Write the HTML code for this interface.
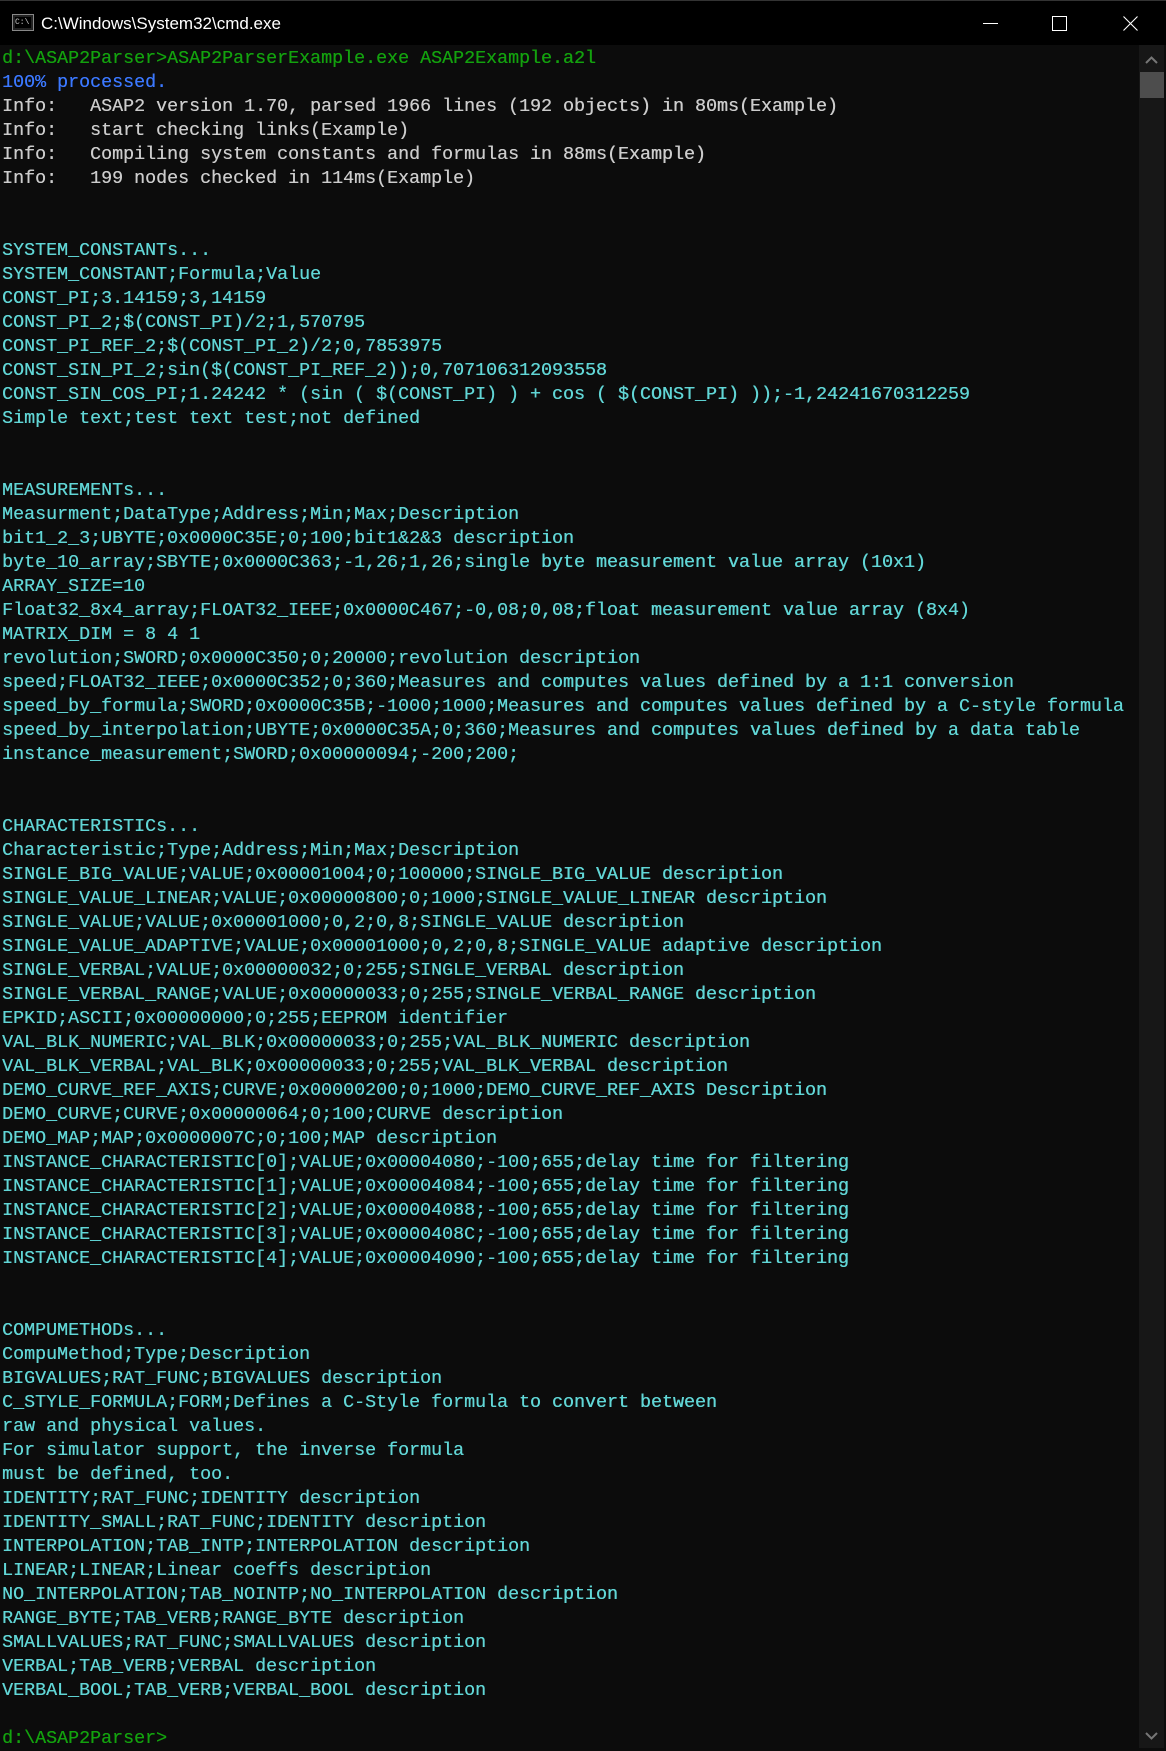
<!DOCTYPE html>
<html><head><meta charset="utf-8"><style>
html,body{margin:0;padding:0;}
body{width:1166px;height:1751px;background:#0c0c0c;position:relative;overflow:hidden;}
#title{position:absolute;left:0;top:0;width:1166px;height:45px;background:#000;border-top:1px solid #333;box-sizing:border-box;}
#title .t{position:absolute;left:41px;top:13px;font:17px "Liberation Sans",sans-serif;color:#fff;}
#icon{position:absolute;left:12px;top:13px;width:22px;height:17px;border:1px solid #888;box-sizing:border-box;background:#222;}
#icon span{position:absolute;left:2px;top:2px;width:16px;height:11px;background:#000;color:#ccc;font:8px "Liberation Mono",monospace;line-height:11px;}
pre{position:absolute;left:2px;top:47px;margin:0;font-family:"Liberation Mono",monospace;font-size:18.33px;line-height:24px;color:#cccccc;white-space:pre;text-shadow:0.3px 0 0 currentColor;}
.g{color:#13a10e}.b{color:#3b78ff}.c{color:#61d6d6}
#sb{position:absolute;left:1139px;top:45px;width:25px;height:1703px;background:#171717;}
#thumb{position:absolute;left:1140px;top:72px;width:24px;height:26px;background:#4d4d4d;}
</style></head><body>
<div id="title"><div id="icon"><span>C:\</span></div><div class="t">C:\Windows\System32\cmd.exe</div>
<svg style="position:absolute;left:966px;top:0" width="200" height="45"><line x1="17" y1="22.5" x2="32" y2="22.5" stroke="#fff" stroke-width="1"/><rect x="86.5" y="15.5" width="14" height="14" fill="none" stroke="#fff"/><path d="M157.5 15.5L171.5 29.5M171.5 15.5L157.5 29.5" stroke="#fff" stroke-width="1.1"/></svg></div>
<div id="sb"></div><div id="thumb"></div>
<svg style="position:absolute;left:1139px;top:52px" width="25" height="14"><path d="M7 11L12.5 5.5L18 11" fill="none" stroke="#777" stroke-width="2"/></svg>
<svg style="position:absolute;left:1139px;top:1730px" width="25" height="14"><path d="M7 3L12.5 8.5L18 3" fill="none" stroke="#777" stroke-width="2"/></svg>
<pre><span class="g">d:\ASAP2Parser>ASAP2ParserExample.exe ASAP2Example.a2l</span>
<span class="b">100% processed.</span>
Info:   ASAP2 version 1.70, parsed 1966 lines (192 objects) in 80ms(Example)
Info:   start checking links(Example)
Info:   Compiling system constants and formulas in 88ms(Example)
Info:   199 nodes checked in 114ms(Example)
<span class="c">

SYSTEM_CONSTANTs...
SYSTEM_CONSTANT;Formula;Value
CONST_PI;3.14159;3,14159
CONST_PI_2;$(CONST_PI)/2;1,570795
CONST_PI_REF_2;$(CONST_PI_2)/2;0,7853975
CONST_SIN_PI_2;sin($(CONST_PI_REF_2));0,707106312093558
CONST_SIN_COS_PI;1.24242 * (sin ( $(CONST_PI) ) + cos ( $(CONST_PI) ));-1,24241670312259
Simple text;test text test;not defined


MEASUREMENTs...
Measurment;DataType;Address;Min;Max;Description
bit1_2_3;UBYTE;0x0000C35E;0;100;bit1&amp;2&amp;3 description
byte_10_array;SBYTE;0x0000C363;-1,26;1,26;single byte measurement value array (10x1)
ARRAY_SIZE=10
Float32_8x4_array;FLOAT32_IEEE;0x0000C467;-0,08;0,08;float measurement value array (8x4)
MATRIX_DIM = 8 4 1
revolution;SWORD;0x0000C350;0;20000;revolution description
speed;FLOAT32_IEEE;0x0000C352;0;360;Measures and computes values defined by a 1:1 conversion
speed_by_formula;SWORD;0x0000C35B;-1000;1000;Measures and computes values defined by a C-style formula
speed_by_interpolation;UBYTE;0x0000C35A;0;360;Measures and computes values defined by a data table
instance_measurement;SWORD;0x00000094;-200;200;


CHARACTERISTICs...
Characteristic;Type;Address;Min;Max;Description
SINGLE_BIG_VALUE;VALUE;0x00001004;0;100000;SINGLE_BIG_VALUE description
SINGLE_VALUE_LINEAR;VALUE;0x00000800;0;1000;SINGLE_VALUE_LINEAR description
SINGLE_VALUE;VALUE;0x00001000;0,2;0,8;SINGLE_VALUE description
SINGLE_VALUE_ADAPTIVE;VALUE;0x00001000;0,2;0,8;SINGLE_VALUE adaptive description
SINGLE_VERBAL;VALUE;0x00000032;0;255;SINGLE_VERBAL description
SINGLE_VERBAL_RANGE;VALUE;0x00000033;0;255;SINGLE_VERBAL_RANGE description
EPKID;ASCII;0x00000000;0;255;EEPROM identifier
VAL_BLK_NUMERIC;VAL_BLK;0x00000033;0;255;VAL_BLK_NUMERIC description
VAL_BLK_VERBAL;VAL_BLK;0x00000033;0;255;VAL_BLK_VERBAL description
DEMO_CURVE_REF_AXIS;CURVE;0x00000200;0;1000;DEMO_CURVE_REF_AXIS Description
DEMO_CURVE;CURVE;0x00000064;0;100;CURVE description
DEMO_MAP;MAP;0x0000007C;0;100;MAP description
INSTANCE_CHARACTERISTIC[0];VALUE;0x00004080;-100;655;delay time for filtering
INSTANCE_CHARACTERISTIC[1];VALUE;0x00004084;-100;655;delay time for filtering
INSTANCE_CHARACTERISTIC[2];VALUE;0x00004088;-100;655;delay time for filtering
INSTANCE_CHARACTERISTIC[3];VALUE;0x0000408C;-100;655;delay time for filtering
INSTANCE_CHARACTERISTIC[4];VALUE;0x00004090;-100;655;delay time for filtering


COMPUMETHODs...
CompuMethod;Type;Description
BIGVALUES;RAT_FUNC;BIGVALUES description
C_STYLE_FORMULA;FORM;Defines a C-Style formula to convert between
raw and physical values.
For simulator support, the inverse formula
must be defined, too.
IDENTITY;RAT_FUNC;IDENTITY description
IDENTITY_SMALL;RAT_FUNC;IDENTITY description
INTERPOLATION;TAB_INTP;INTERPOLATION description
LINEAR;LINEAR;Linear coeffs description
NO_INTERPOLATION;TAB_NOINTP;NO_INTERPOLATION description
RANGE_BYTE;TAB_VERB;RANGE_BYTE description
SMALLVALUES;RAT_FUNC;SMALLVALUES description
VERBAL;TAB_VERB;VERBAL description
VERBAL_BOOL;TAB_VERB;VERBAL_BOOL description
</span>
<span class="g">d:\ASAP2Parser></span></pre>
</body></html>
